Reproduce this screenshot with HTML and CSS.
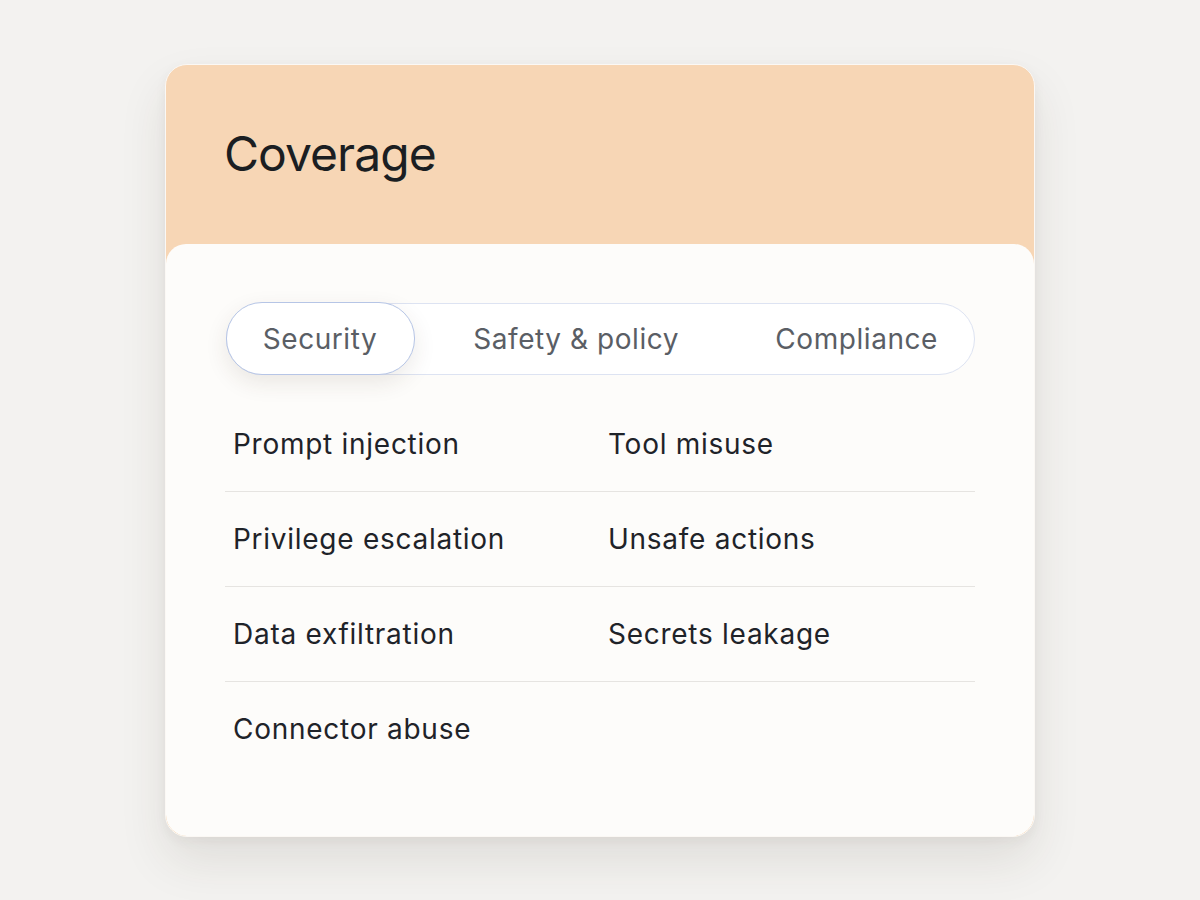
FILE: index.html
```html
<!DOCTYPE html>
<html lang="en">
<head>
<meta charset="utf-8">
<title>Coverage</title>
<link rel="stylesheet" href="styles.css">
</head>
<body>
  <section class="card">
    <header class="card-header">
      <h1 class="title">Coverage</h1>
    </header>
    <div class="panel">
      <div class="tabs" role="tablist">
        <button class="tab active" role="tab">Security</button>
        <button class="tab" role="tab">Safety &amp; policy</button>
        <button class="tab" role="tab">Compliance</button>
      </div>
      <ul class="items">
        <li class="item">Prompt injection</li>
        <li class="item">Tool misuse</li>
        <li class="item">Privilege escalation</li>
        <li class="item">Unsafe actions</li>
        <li class="item">Data exfiltration</li>
        <li class="item">Secrets leakage</li>
        <li class="item last">Connector abuse</li>
        <li class="item last"></li>
      </ul>
    </div>
  </section>
</body>
</html>
```

FILE: styles.css
```css
* { box-sizing: border-box; }

html, body {
  margin: 0;
  height: 100%;
}

body {
  background: #f3f2f0;
  font-family: Inter, "Noto Sans", sans-serif;
  display: flex;
  align-items: center;
  justify-content: center;
}

.card {
  width: 870px;
  background: #f7d6b5;
  border: 1px solid #fbf8f4;
  border-radius: 22px;
  box-shadow: 0 24px 48px rgba(60, 45, 30, 0.10), 0 4px 12px rgba(60, 45, 30, 0.05);
  overflow: hidden;
}

.card-header {
  height: 179px;
  padding: 0 60px 0 58px;
  display: flex;
  align-items: center;
}

.title {
  margin: 0;
  font-size: 48px;
  font-weight: 400;
  letter-spacing: -0.02em;
  color: #1b1e22;
  line-height: 1.2;
}

.panel {
  background: #fdfcfa;
  border-radius: 20px 20px 21px 21px;
  padding: 59px 59px 59px 59px;
}

.tabs {
  display: flex;
  justify-content: space-between;
  height: 72px;
  background: #ffffff;
  border: 1.5px solid #dde3f2;
  border-radius: 36px;
  margin: 0 0 22px 1px;
}

.tab {
  font-family: inherit;
  font-size: 28px;
  color: #5a5e65;
  background: transparent;
  border: none;
  padding: 0 36px;
  height: 100%;
  border-radius: 36px;
  cursor: pointer;
  letter-spacing: 0.02em;
}

.tab.active {
  background: #ffffff;
  border: 1.5px solid #b6c5e6;
  margin: -1.5px;
  height: calc(100% + 3px);
  width: 189px;
  padding: 0;
  box-shadow: 0 8px 22px rgba(70, 50, 30, 0.10);
}

.items {
  list-style: none;
  margin: 0;
  padding: 0;
  display: grid;
  grid-template-columns: 375px 375px;
}

.item {
  height: 95px;
  display: flex;
  align-items: center;
  padding-left: 8px;
  font-size: 28px;
  letter-spacing: 0.026em;
  color: #1f2329;
  border-bottom: 1.5px solid #e6e4e1;
}

.item.last {
  border-bottom: none;
}
```
